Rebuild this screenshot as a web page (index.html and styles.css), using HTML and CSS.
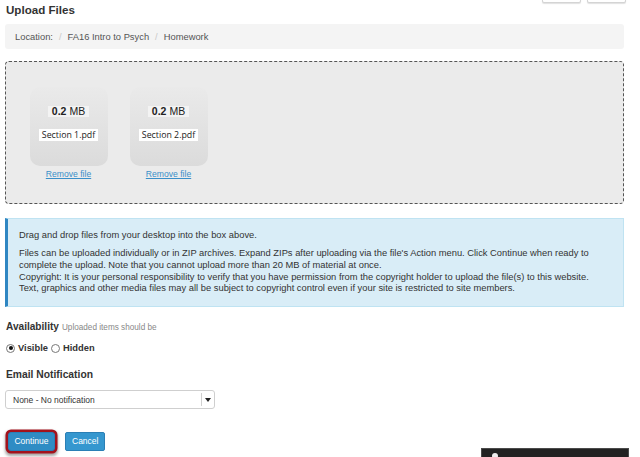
FILE: index.html
```html
<!DOCTYPE html>
<html lang="en">
<head>
<meta charset="utf-8">
<title>Upload Files</title>
<link rel="stylesheet" href="styles.css">
</head>
<body>
<div class="page">
  <header class="head">
    <h1 class="title">Upload Files</h1>
    <div class="tools">
      <span class="tool"></span>
      <span class="tool"></span>
    </div>
  </header>

  <nav class="crumbs">
    <span>Location:</span><span class="sep">/</span><span>FA16 Intro to Psych</span><span class="sep">/</span><span>Homework</span>
  </nav>

  <div class="drop">
    <div class="file">
      <div class="card">
        <span class="size"><b>0.2</b> MB</span>
        <span class="name">Section 1.pdf</span>
      </div>
      <a class="remove" href="#">Remove file</a>
    </div>
    <div class="file">
      <div class="card">
        <span class="size"><b>0.2</b> MB</span>
        <span class="name">Section 2.pdf</span>
      </div>
      <a class="remove" href="#">Remove file</a>
    </div>
  </div>

  <div class="info">
    <p>Drag and drop files from your desktop into the box above.</p>
    <p>Files can be uploaded individually or in ZIP archives. Expand ZIPs after uploading via the file's Action menu. Click Continue when ready to<br>complete the upload. Note that you cannot upload more than 20 MB of material at once.<br>Copyright: It is your personal responsibility to verify that you have permission from the copyright holder to upload the file(s) to this website.<br>Text, graphics and other media files may all be subject to copyright control even if your site is restricted to site members.</p>
  </div>

  <div class="avail">
    <span class="label">Availability</span>
    <span class="hint">Uploaded items should be</span>
  </div>
  <div class="radios">
    <span class="radio checked"></span><span class="rlabel">Visible</span>
    <span class="radio"></span><span class="rlabel">Hidden</span>
  </div>

  <div class="label email">Email Notification</div>
  <div class="select">
    <span class="select-text">None - No notification</span>
    <span class="select-arrow"></span>
  </div>

  <div class="actions">
    <button class="btn primary">Continue</button>
    <button class="btn">Cancel</button>
  </div>
</div>
<div class="dock"><span class="dock-dot"></span></div>
</body>
</html>
```

FILE: styles.css
```css
html, body {
  margin: 0;
  padding: 0;
  background: #ffffff;
  height: 457px;
  overflow: hidden;
}
body {
  font-family: "Liberation Sans", Arial, sans-serif;
  color: #333333;
  font-size: 9.36px;
}
.page {
  width: 619px;
  margin-left: 5px;
}
.head {
  display: flex;
  justify-content: space-between;
  align-items: flex-start;
  height: 20px;
}
.title {
  margin: 0 0 0 1px;
  font-size: 11.6px;
  line-height: 20px;
  font-weight: bold;
  color: #333;
}
.tools {
  display: flex;
  gap: 6px;
  margin-right: -2px;
  margin-top: -19px;
}
.tool {
  display: block;
  width: 37px;
  height: 20px;
  background: #fff;
  border: 1px solid #d4d4d4;
  border-radius: 2px;
  box-shadow: 0 1px 1px rgba(0,0,0,.12);
}
.crumbs {
  margin-top: 4px;
  height: 25px;
  line-height: 26px;
  padding: 0 10px;
  background: #f4f4f4;
  border-radius: 3px;
  color: #555;
  font-size: 9.36px;
}
.sep {
  color: #c8c8c8;
  padding: 0 6px;
}
.drop {
  margin-top: 12px;
  border: 1.5px dashed #555;
  border-radius: 4px;
  background: #ebebeb;
  display: flex;
  gap: 22px;
  padding: 24.5px 0 0 23.5px;
  box-sizing: content-box;
  height: 116px;
}
.file {
  display: flex;
  flex-direction: column;
  align-items: center;
  width: 78px;
}
.card {
  width: 78px;
  height: 79px;
  border-radius: 10px;
  background: linear-gradient(#eaeaea, #dbdbdb);
  display: flex;
  flex-direction: column;
  align-items: center;
  box-sizing: border-box;
  padding-top: 19px;
}
.size {
  background: #f3f3f3;
  padding: 0 4px;
  height: 11px;
  line-height: 11px;
  font-size: 10.5px;
  color: #222;
}
.size b {
  font-weight: bold;
}
.name {
  margin-top: 12px;
  background: #fff;
  padding: 0 3px;
  height: 12px;
  line-height: 12px;
  font-family: "Open Sans", "DejaVu Sans", sans-serif;
  font-size: 8.8px;
  color: #222;
}
.remove {
  margin-top: 2px;
  font-size: 8.6px;
  line-height: 12px;
  color: #3a8fc9;
  text-decoration: underline;
}
.info {
  margin-top: 14px;
  background: #d9edf7;
  border: 1px solid #bfe3f2;
  border-left: 3px solid #2f86c2;
  padding: 11px 10px 11px 11px;
  color: #333;
  font-size: 9.36px;
  line-height: 11.7px;
}
.info p {
  margin: 0;
}
.info p + p {
  margin-top: 7px;
}
.avail {
  margin-top: 14px;
  margin-left: 1px;
  line-height: 12px;
  display: flex;
  align-items: baseline;
  gap: 3px;
}
.label {
  font-weight: bold;
  font-size: 10.1px;
  color: #333;
}
.hint {
  font-size: 8.2px;
  color: #888;
}
.radios {
  margin-top: 8px;
  margin-left: 1px;
  height: 12px;
  display: flex;
  align-items: center;
  font-weight: bold;
  font-size: 9.36px;
}
.radio {
  width: 7px;
  height: 7px;
  border-radius: 50%;
  border: 1px solid #777;
  background: #fff;
  box-sizing: content-box;
  margin-right: 3px;
  position: relative;
}
.radio.checked::after {
  content: "";
  position: absolute;
  left: 1.5px;
  top: 1.5px;
  width: 4px;
  height: 4px;
  border-radius: 50%;
  background: #111;
}
.rlabel {
  margin-right: 3px;
}
.email {
  margin-top: 15px;
  margin-left: 1px;
  line-height: 12px;
  font-size: 10.3px;
}
.select {
  margin-top: 9px;
  width: 210px;
  height: 19px;
  box-sizing: border-box;
  border: 1px solid #cfcfcf;
  border-radius: 3px;
  background: #fff;
  display: flex;
  align-items: center;
  justify-content: space-between;
  padding-left: 7px;
}
.select-text {
  font-size: 8.5px;
  color: #333;
}
.select-arrow {
  width: 12px;
  height: 13px;
  border-left: 1px solid #d0d0d0;
  position: relative;
}
.select-arrow::after {
  content: "";
  position: absolute;
  left: 3px;
  top: 5px;
  border-left: 3.5px solid transparent;
  border-right: 3.5px solid transparent;
  border-top: 4px solid #222;
}
.actions {
  margin-top: 23px;
  display: flex;
  gap: 10px;
  padding-left: 3px;
}
.btn {
  height: 19px;
  padding: 0 6px;
  border: 1px solid #2b7fb5;
  border-radius: 2px;
  background: #3597cf;
  color: #fff;
  font-family: "Liberation Sans", Arial, sans-serif;
  font-size: 8.5px;
  line-height: 17px;
}
.btn.primary {
  width: 47px;
  padding: 0;
  background: #2f8cc4;
  box-shadow: 0 0 0 2.5px #a3121c, 0 2px 3px 2.5px rgba(0,0,0,.35);
  border-radius: 3px;
}
.dock {
  position: absolute;
  left: 481px;
  top: 448px;
  width: 148px;
  height: 14px;
  background: #222;
  border: 1px solid #4a4a4a;
  box-sizing: border-box;
}
.dock-dot {
  position: absolute;
  left: 10px;
  top: 4px;
  width: 6px;
  height: 6px;
  border-radius: 50%;
  background: #eee;
}
```
